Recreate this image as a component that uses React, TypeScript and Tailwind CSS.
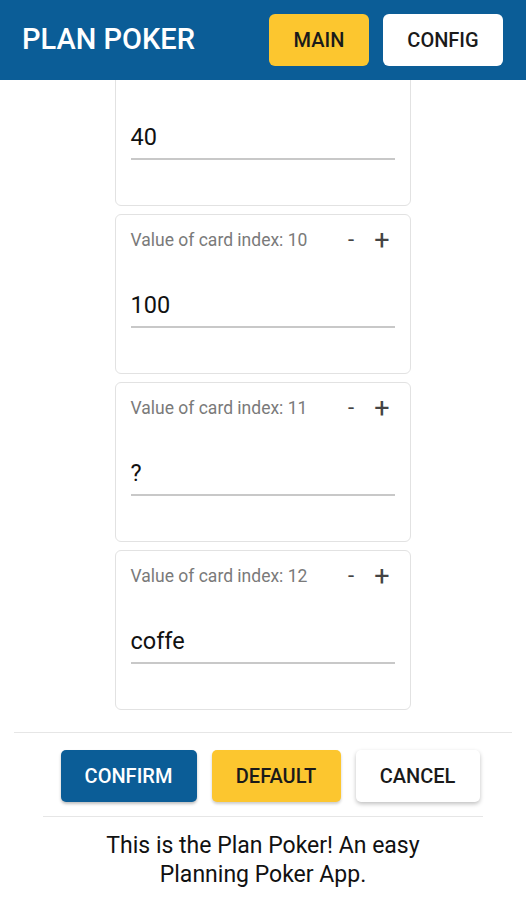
import React from 'react';

const cards = [
  { index: 9, value: '40' },
  { index: 10, value: '100' },
  { index: 11, value: '?' },
  { index: 12, value: 'coffe' },
];

function CardField({ index, value }: { index: number; value: string }) {
  return (
    <div className="w-[296px] h-[160px] shrink-0 rounded-[6px] border border-[#e2e2e2] bg-white px-[15px]">
      <div className="flex items-center justify-between pt-[12px] h-[38px]">
        <span className="text-[17.5px] text-[#7a7a7a]">Value of card index: {index}</span>
        <div className="flex items-center gap-[20px] pr-[5px] text-[#444]">
          <span className="text-[22px] leading-none">-</span>
          <span className="text-[27px] leading-none">+</span>
        </div>
      </div>
      <div className="mt-[38px] border-b-2 border-[#c8c8c8] pb-[7px] text-[23.5px] leading-[28px] text-[#111]">
        {value}
      </div>
    </div>
  );
}

export default function App() {
  return (
    <div className="w-[526px] h-[900px] flex flex-col bg-white overflow-hidden" style={{ fontFamily: 'Roboto, "Liberation Sans", sans-serif' }}>
      {/* Header */}
      <header className="h-[80px] shrink-0 bg-[#0b5d97] flex items-center pl-[22px] pr-[23px]">
        <h1 className="text-[29px] font-medium text-white">PLAN POKER</h1>
        <div className="ml-auto flex items-center gap-[14px]">
          <button className="w-[100px] h-[52px] rounded-[6px] bg-[#fcc62f] text-[20px] font-medium text-[#1a1a1a]">MAIN</button>
          <button className="w-[120px] h-[52px] rounded-[6px] bg-white text-[20px] font-medium text-[#1a1a1a]">CONFIG</button>
        </div>
      </header>

      {/* Scrolled list */}
      <div className="h-[640px] shrink-0 overflow-hidden">
        <div className="flex flex-col items-center gap-[8px] mt-[-34px] ml-[-1px]">
          {cards.map((c) => (
            <CardField key={c.index} index={c.index} value={c.value} />
          ))}
        </div>
      </div>

      {/* Footer */}
      <div className="mx-[14px] mt-[12px] border-t border-[#e6e6e6]" />
      <div className="flex justify-center gap-[15px] pt-[17px] pl-[14px]">
        <button className="w-[136px] h-[52px] rounded-[5px] bg-[#0b5d97] text-[20px] font-medium text-white shadow-[0_2px_3px_rgba(0,0,0,0.25)]">CONFIRM</button>
        <button className="w-[129px] h-[52px] rounded-[5px] bg-[#fcc62f] text-[20px] font-medium text-[#1a1a1a] shadow-[0_2px_3px_rgba(0,0,0,0.2)]">DEFAULT</button>
        <button className="w-[124px] h-[52px] rounded-[5px] bg-white text-[20px] font-medium text-[#1a1a1a] shadow-[0_2px_4px_rgba(0,0,0,0.25)]">CANCEL</button>
      </div>
      <div className="mx-[43px] mt-[14px] border-t border-[#e6e6e6]" />
      <p className="mt-[14px] text-center text-[23px] leading-[29px] text-[#111]">
        This is the Plan Poker! An easy
        <br />
        Planning Poker App.
      </p>
    </div>
  );
}
